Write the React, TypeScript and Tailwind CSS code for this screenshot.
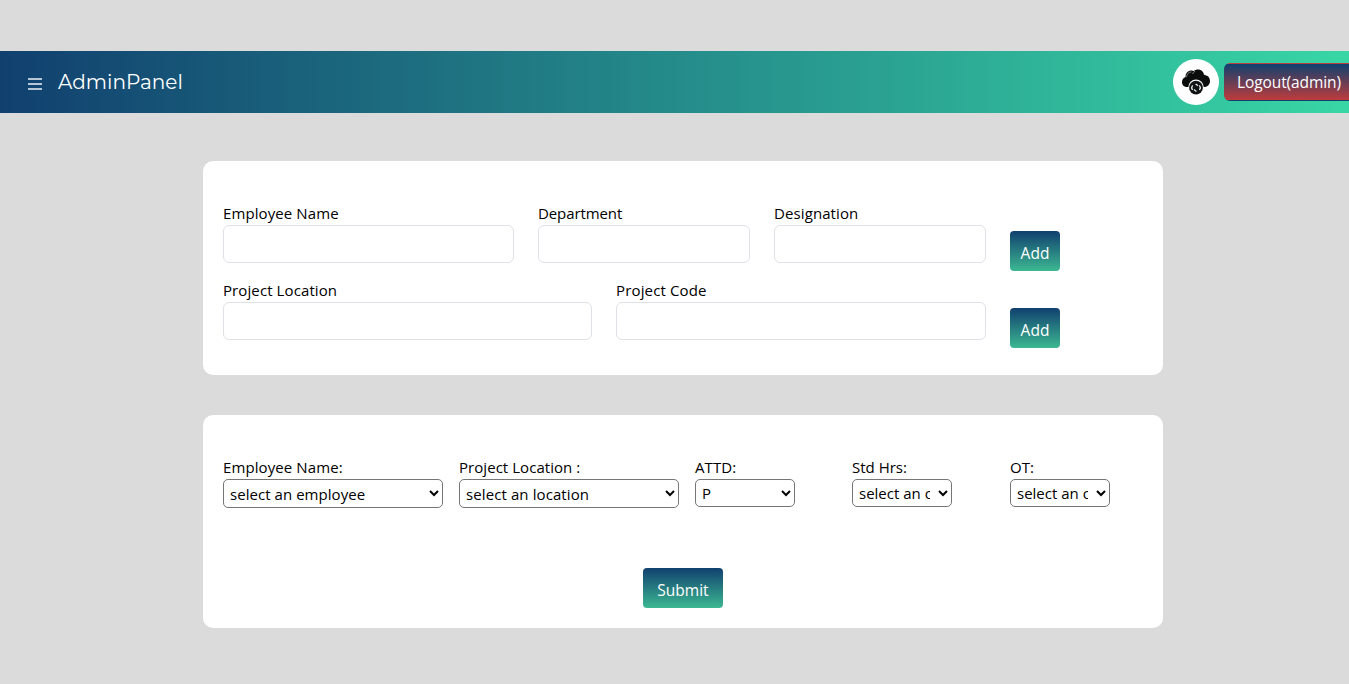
import React from "react";

const labelText = "text-[15px] leading-[25px] -mb-px text-black whitespace-nowrap";

function Field({ label, className, spacing }: { label: string; className: string; spacing: string }) {
  return (
    <label className={`flex flex-col ${className}`}>
      <span className={`${labelText} ${spacing}`}>{label}</span>
      <input type="text" className="h-[38px] w-full rounded-md border border-[#dee2e6] bg-white px-3 outline-none" />
    </label>
  );
}

function Picker({ label, option, className, size, spacing }: { label: string; option: string; className: string; size: string; spacing: string }) {
  return (
    <label className={`flex flex-col ${className}`}>
      <span className={`${labelText} ${spacing}`}>{label}</span>
      <select className={`rounded-[5px] border border-[#767676] bg-white py-0.5 pl-0.5 text-[15px] text-black ${size}`}>
        <option>{option}</option>
      </select>
    </label>
  );
}

function GradientButton({ children, className }: { children: React.ReactNode; className: string }) {
  return (
    <button className={`h-10 rounded-[4px] bg-[linear-gradient(to_bottom,#11406f,#3cb892)] pt-[6px] text-[15.5px] font-medium text-white ${className}`}>
      {children}
    </button>
  );
}

function CloudSync() {
  return (
    <svg width="30" height="28" viewBox="0 0 30 28">
      <path
        d="M6 19C2.500 19 1 16.500 1 14c0-2.600 1.500-4.500 3.500-5C4.500 5 7 2.500 10.500 2.500c1 0 1.600.2 2.300.5C14 2 15.400 1.500 17 1.500c3.200 0 5.500 2.200 6 5.200 1 .1 1.500.4 2 .9 2.400.3 4 2.500 4 5.400 0 3-2 5.500-5 6z"
        fill="#0b0d0d"
      />
      <path d="M5.500 9.200c.2-3.200 2.200-5.200 5-5.300M11.500 6c.5-1.300 1.300-2.200 2.600-2.900" fill="none" stroke="#a5abaa" strokeWidth="0.7" />
      <circle cx="15" cy="19.200" r="7.700" fill="#fff" />
      <circle cx="15" cy="19.700" r="6.900" fill="#111414" />
      <path d="M11.500 22a4 4 0 0 1 0-4.600M18.500 17.400a4 4 0 0 1 0 4.600" fill="none" stroke="#fff" strokeWidth="1.200" />
      <path d="M14.600 16l2.400 1.800M13 21.600l2.400 1.800" stroke="#eceeed" strokeWidth="1.200" />
    </svg>
  );
}

export default function App() {
  return (
    <div className="h-[684px] w-full overflow-hidden bg-[#dbdbdb] pt-[51px] font-['Open_Sans','Noto_Sans',sans-serif]">
      <header className="flex h-[62px] items-center justify-between bg-[linear-gradient(to_right,#11406f,#38d6a5)]">
        <div className="flex items-center pl-7">
          <button aria-label="Menu" className="mt-1 flex w-[14px] flex-col gap-[3px]">
            <span className="h-[2px] bg-[#b8c7d5]" />
            <span className="h-[2px] bg-[#b8c7d5]" />
            <span className="h-[2px] bg-[#b8c7d5]" />
          </button>
          <span className="ml-4 font-['Montserrat','Inter',sans-serif] text-[20px] leading-[30px] text-white">AdminPanel</span>
        </div>
        <div className="flex items-center gap-[5px]">
          <div className="flex h-[46px] w-[46px] items-center justify-center rounded-full bg-white">
            <CloudSync />
          </div>
          <button className="h-[38px] w-[125px] rounded-l-md border-y border-l border-transparent bg-[linear-gradient(to_bottom,#11406f,#bd3c3c)] pt-[2px] pl-3 text-left text-[15.5px] tracking-[-0.1px] font-medium whitespace-nowrap text-white">
            Logout(admin)
          </button>
        </div>
      </header>

      <main className="ml-[203px] flex w-[960px] flex-col gap-10 pt-12">
        <form className="flex h-[214px] flex-col gap-[15px] rounded-[10px] bg-white px-5 pt-10">
          <div className="flex gap-6">
            <Field label="Employee Name" className="w-[291px]" spacing="tracking-[0.1px]" />
            <Field label="Department" className="w-[212px]" spacing="tracking-[-0.1px]" />
            <Field label="Designation" className="w-[212px]" spacing="tracking-[0.1px]" />
            <GradientButton className="mt-[30px] -mb-2 w-[50px]">Add</GradientButton>
          </div>
          <div className="flex gap-6">
            <Field label="Project Location" className="w-[369px]" spacing="tracking-[0.1px]" />
            <Field label="Project Code" className="w-[370px]" spacing="tracking-[0.15px]" />
            <GradientButton className="mt-[30px] -mb-2 w-[50px]">Add</GradientButton>
          </div>
        </form>

        <form className="flex h-[213px] flex-col items-center rounded-[10px] bg-white px-5 pt-10">
          <div className="flex h-[113px] w-full">
            <Picker label="Employee Name:" option="select an employee" className="w-[236px]" size="h-[29px] w-[220px] tracking-[0.05px]" spacing="tracking-[0.1px]" />
            <Picker label="Project Location :" option="select an location" className="w-[236px]" size="h-[29px] w-[220px] tracking-[0.1px]" spacing="tracking-[0.05px]" />
            <Picker label="ATTD:" option="P" className="w-[157px]" size="h-[28px] w-[100px]" spacing="tracking-[0.1px]" />
            <Picker label="Std Hrs:" option="select an option" className="w-[158px]" size="h-[28px] w-[100px] pr-[5px]" spacing="" />
            <Picker label="OT:" option="select an option" className="w-[100px]" size="h-[28px] w-[100px] pr-[5px]" spacing="" />
          </div>
          <GradientButton className="w-20">Submit</GradientButton>
        </form>
      </main>
    </div>
  );
}
